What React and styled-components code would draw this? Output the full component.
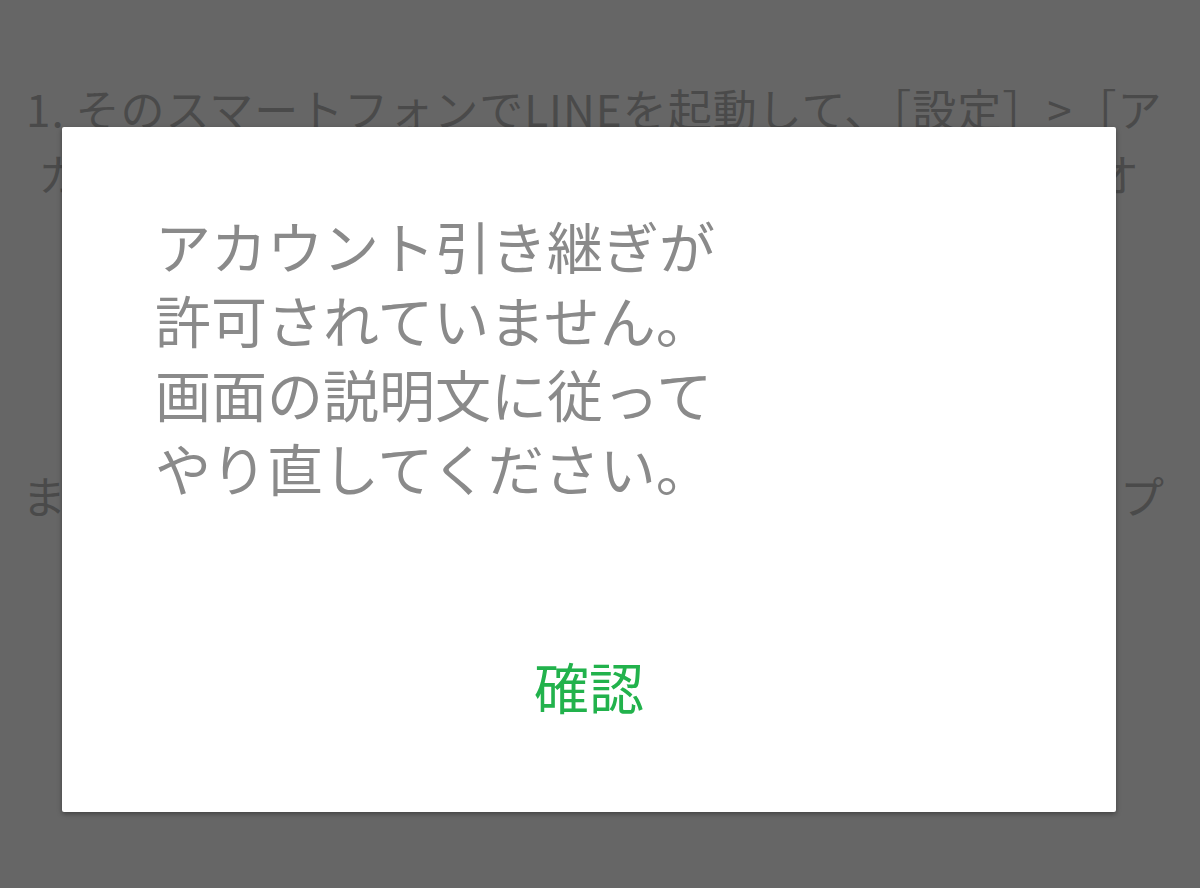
import React from 'react';
import styled, { createGlobalStyle } from 'styled-components';

const COLORS = {
  dim: '#666666',
  dimText: '#4a4a4a',
  card: '#ffffff',
  message: '#8a8a8a',
  green: '#22b24c',
};

const FONT = `'Noto Sans CJK JP', 'Noto Sans', sans-serif`;

const GlobalStyle = createGlobalStyle`
  html, body {
    margin: 0;
    padding: 0;
    background: ${COLORS.dim};
  }
  body {
    font-family: ${FONT};
  }
`;

const Screen = styled.div`
  position: relative;
  width: 1200px;
  height: 888px;
  overflow: hidden;
  background: ${COLORS.dim};
`;

const Guide = styled.div`
  padding: 76px 0 0 26px;
  display: flex;
  flex-direction: column;
`;

const GuideLine = styled.div`
  font-size: 44px;
  line-height: 65px;
  color: ${COLORS.dimText};
  white-space: nowrap;
  letter-spacing: ${(p) => p.$spacing || 0}px;
  margin-top: ${(p) => p.$gap || 0}px;
  margin-left: ${(p) => p.$indent || 0}px;
`;

const Dialog = styled.div`
  position: absolute;
  left: 62px;
  top: 127px;
  width: 1054px;
  height: 685px;
  box-sizing: border-box;
  background: ${COLORS.card};
  border-radius: 2px;
  box-shadow: 0 2px 5px rgba(0, 0, 0, 0.35);
  display: flex;
  flex-direction: column;
  padding: 81px 0 0 93px;
`;

const Message = styled.p`
  margin: 0;
  font-size: 56px;
  line-height: 74px;
  color: ${COLORS.message};
`;

const Actions = styled.div`
  margin-top: auto;
  margin-left: -93px;
  height: 190px;
  display: flex;
  justify-content: center;
  align-items: flex-start;
  padding-top: 30px;
  box-sizing: border-box;
`;

const ConfirmButton = styled.button`
  border: 0;
  background: transparent;
  padding: 0;
  font-family: ${FONT};
  font-size: 55px;
  line-height: 66px;
  color: ${COLORS.green};
  cursor: pointer;
`;

export default function App() {
  return (
    <>
      <GlobalStyle />
      <Screen>
        <Guide>
          <GuideLine $spacing={1}>1. そのスマートフォンでLINEを起動して、［設定］&gt;［ア</GuideLine>
          <GuideLine $spacing={0.2} $indent={12}>カウント引き継ぎ］をタップして、アカウント設定をオ</GuideLine>
          <GuideLine $spacing={1.8} $gap={257} $indent={-4}>または新しいスマートフォンでログインボタンをタップ</GuideLine>
        </Guide>
        <Dialog>
          <Message>
            アカウント引き継ぎが<br />
            許可されていません。<br />
            画面の説明文に従って<br />
            やり直してください。
          </Message>
          <Actions>
            <ConfirmButton>確認</ConfirmButton>
          </Actions>
        </Dialog>
      </Screen>
    </>
  );
}
